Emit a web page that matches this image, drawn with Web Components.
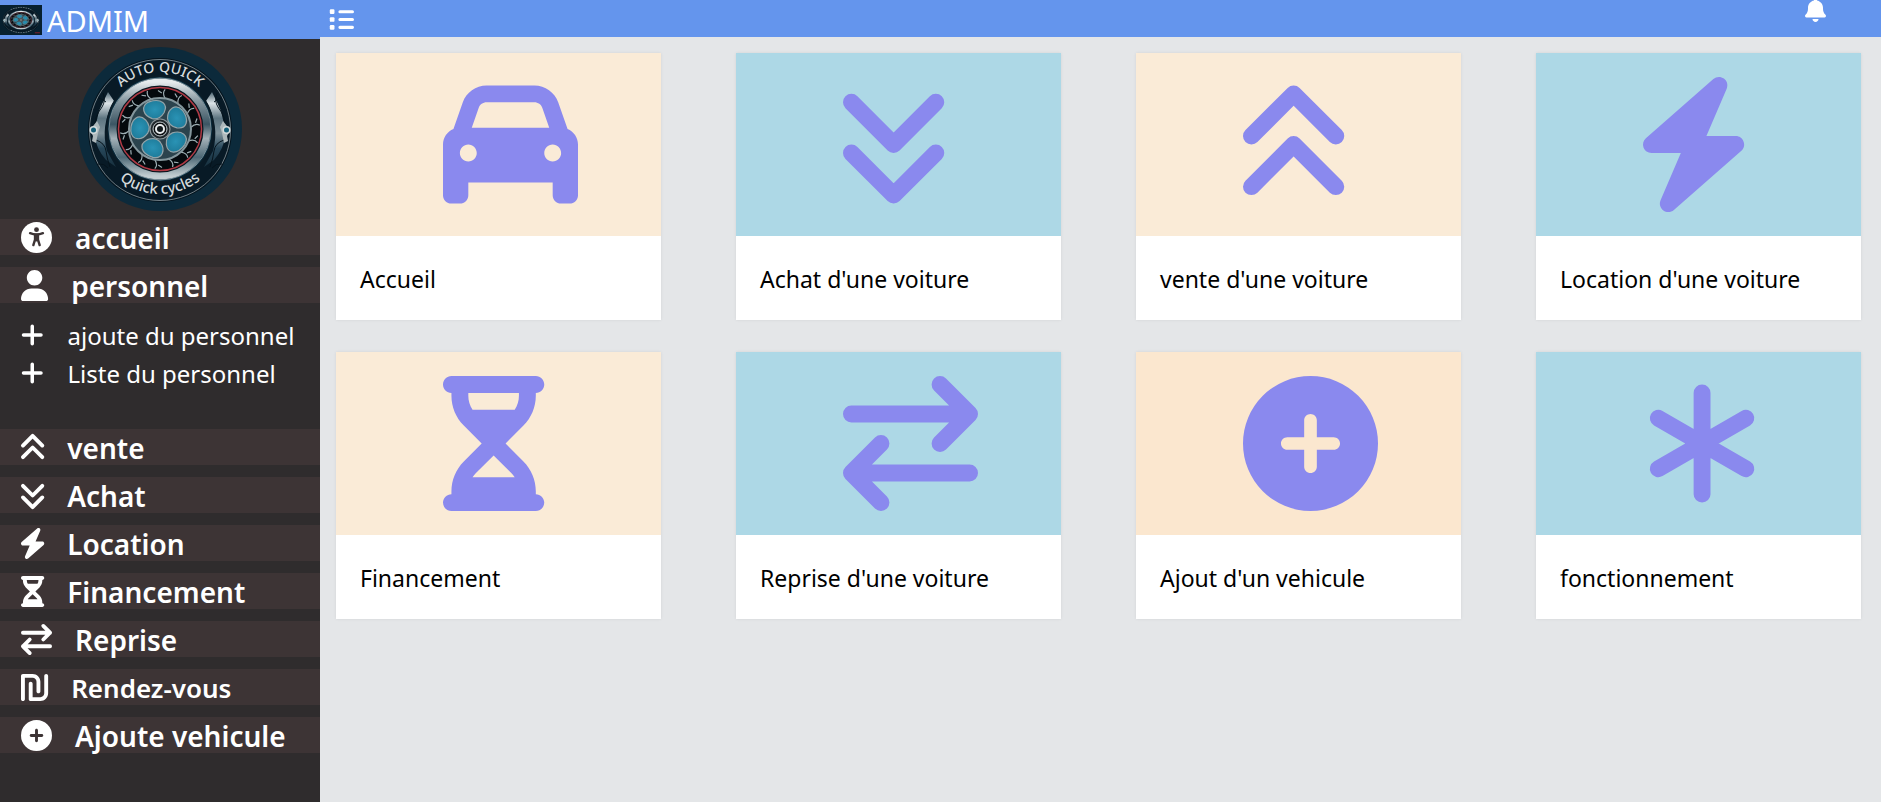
<!DOCTYPE html>
<html lang="fr">
<head>
<meta charset="utf-8">
<title>ADMIM</title>
<style>
  html, body { margin: 0; height: 100%; }
  body { font-family: "Noto Sans", "Open Sans", sans-serif; color: #000; background: #fff; }
</style>
</head>
<body>
<admin-app>
  <side-bar slot="side">
    <nav-item icon="access" href="#accueil">accueil</nav-item>
    <nav-item icon="user" href="#personnel">personnel</nav-item>
    <nav-group>
      <nav-item sub icon="plus" href="#ajout-personnel">ajoute du personnel</nav-item>
      <nav-item sub icon="plus" href="#liste-personnel">Liste du personnel</nav-item>
    </nav-group>
    <nav-item icon="up" href="#vente">vente</nav-item>
    <nav-item icon="down" href="#achat">Achat</nav-item>
    <nav-item icon="bolt" href="#location">Location</nav-item>
    <nav-item icon="hourglass" href="#financement">Financement</nav-item>
    <nav-item icon="swap" href="#reprise">Reprise</nav-item>
    <nav-item small icon="shekel" href="#rendez-vous">Rendez-vous</nav-item>
    <nav-item icon="circleplus" href="#ajout-vehicule">Ajoute vehicule</nav-item>
  </side-bar>
  <top-bar slot="main"></top-bar>
  <card-grid slot="main">
    <tile-card icon="car" href="#accueil">Accueil</tile-card>
    <tile-card tone="blue" icon="down" href="#achat">Achat d'une voiture</tile-card>
    <tile-card icon="up" href="#vente">vente d'une voiture</tile-card>
    <tile-card tone="blue" icon="bolt" href="#location">Location d'une voiture</tile-card>
    <tile-card icon="hourglass" href="#financement">Financement</tile-card>
    <tile-card tone="blue" icon="swap" href="#reprise">Reprise d'une voiture</tile-card>
    <tile-card tone="peach" icon="circleplus" href="#ajout-vehicule">Ajout d'un vehicule</tile-card>
    <tile-card tone="blue" icon="asterisk" href="#fonctionnement">fonctionnement</tile-card>
  </card-grid>
</admin-app>

<script>
const stroke = (d, w = 64) =>
  `<path d="${d}" fill="none" stroke="currentColor" stroke-width="${w}" stroke-linecap="round" stroke-linejoin="round"/>`;
const fill = d => `<path d="${d}" fill="currentColor" fill-rule="evenodd"/>`;

/* name: [view box width on a 512 high grid, markup] */
const ICONS = {
  car: [512, fill("M39.6 196.8L74.8 96.3C88.3 57.8 124.6 32 165.4 32H346.6C387.4 32 423.7 57.8 437.2 96.3L472.4 196.8C495.6 206.4 512 229.3 512 256V448C512 465.7 497.7 480 480 480H448C430.3 480 416 465.7 416 448V400H96V448C96 465.7 81.7 480 64 480H32C14.3 480 0 465.7 0 448V256C0 229.3 16.4 206.4 39.6 196.8zM109.1 192H402.9L376.8 117.4C372.3 104.6 360.2 96 346.6 96H165.4C151.8 96 139.7 104.6 135.2 117.4L109.1 192zM96 256C78.3 256 64 270.3 64 288C64 305.7 78.3 320 96 320C113.7 320 128 305.7 128 288C128 270.3 113.7 256 96 256zM416 320C433.7 320 448 305.7 448 288C448 270.3 433.7 256 416 256C398.3 256 384 270.3 384 288C384 305.7 398.3 320 416 320z")],
  down: [384, stroke("M32 96L192 256L352 96M32 288L192 448L352 288")],
  up: [384, stroke("M32 224L192 64L352 224M32 416L192 256L352 416")],
  bolt: [384, fill("M240.5 224H352C365.3 224 377.3 232.3 381.1 244.7C386.6 257.2 383.1 271.3 373.1 280.1L117.1 504.1C105.8 513.9 89.3 514.7 77.2 505.9C65.1 497.1 60.7 481.1 66.6 467.4L143.5 288H32C18.7 288 6.7 279.7 2 267.3C-2.6 254.8 .9 240.7 10.9 231.9L266.9 7.9C278.2 -1.9 294.7 -2.7 306.8 6.1C318.9 14.9 323.3 30.9 317.4 44.6L240.5 224z")],
  hourglass: [384, fill("M352 0C369.7 0 384 14.3 384 32C384 49.7 369.7 64 352 64V75C352 117.4 335.1 158.1 305.1 188.1L237.3 256L305.1 323.9C335.1 353.9 352 394.6 352 437V448C369.7 448 384 462.3 384 480C384 497.7 369.7 512 352 512H32C14.3 512 0 497.7 0 480C0 462.3 14.3 448 32 448V437C32 394.6 48.9 353.9 78.9 323.9L146.7 256L78.9 188.1C48.9 158.1 32 117.4 32 75V64C14.3 64 0 49.7 0 32C0 14.3 14.3 0 32 0H352zM112 128H272C282.4 112.4 288 94 288 75V64H96V75C96 94 101.6 112.4 112 128zM112 384H272C268.5 378.7 264.5 373.7 259.9 369.1L192 301.3L124.1 369.1C119.5 373.7 115.5 378.7 112 384z")],
  swap: [512, stroke("M32 144H480M368 32L480 144L368 256M480 368H32M144 256L32 368L144 480")],
  circleplus: [512, fill("M256 512A256 256 0 1 0 256 0A256 256 0 1 0 256 512zM232 344V280H168C154.7 280 144 269.3 144 256S154.7 232 168 232H232V168C232 154.7 242.7 144 256 144S280 154.7 280 168V232H344C357.3 232 368 242.7 368 256S357.3 280 344 280H280V344C280 357.3 269.3 368 256 368S232 357.3 232 344z")],
  asterisk: [448, stroke("M224 64V448M58 160L390 352M390 160L58 352")],
  plus: [448, stroke("M64 256H384M224 96V416")],
  user: [448, fill("M224 256C294.7 256 352 198.7 352 128S294.7 0 224 0S96 57.3 96 128S153.3 256 224 256zM274.7 304H173.3C77.6 304 0 381.6 0 477.3C0 496.4 15.5 512 34.7 512H413.4C432.5 512 448 496.5 448 477.3C448 381.6 370.4 304 274.7 304z")],
  shekel: [448, fill("M32 32C14.3 32 0 46.3 0 64V448C0 465.7 14.3 480 32 480S64 465.7 64 448V96H192C227.3 96 256 124.7 256 160V320C256 337.7 270.3 352 288 352S320 337.7 320 320V160C320 89.3 262.7 32 192 32H32zM320 480C390.7 480 448 422.7 448 352V64C448 46.3 433.7 32 416 32S384 46.3 384 64V352C384 387.3 355.3 416 320 416H192V192C192 174.3 177.7 160 160 160S128 174.3 128 192V448C128 465.7 142.3 480 160 480H320z")],
  access: [512, `<circle cx="256" cy="256" r="256" fill="currentColor"/>
    <g fill="none" stroke="var(--cut, #3d3435)" stroke-linecap="round" stroke-linejoin="round">
      <circle cx="256" cy="126" r="40" fill="var(--cut, #3d3435)" stroke="none"/>
      <path d="M150 184Q256 226 362 184" stroke-width="40"/>
      <path d="M232 212V290L204 382M280 212V290L308 382" stroke-width="40"/>
      <path d="M256 216V296" stroke-width="56"/>
    </g>`],
  list: [512, stroke("M224 96H480M224 256H480M224 416H480") +
    `<g fill="currentColor"><rect x="16" y="48" width="96" height="96" rx="24"/><rect x="16" y="208" width="96" height="96" rx="24"/><rect x="16" y="368" width="96" height="96" rx="24"/></g>`],
  bell: [448, fill("M256 32V51.2C329 66 384 130.6 384 208V226.8C384 273.9 401.3 319.2 432.5 354.4L439.9 362.7C448.3 372.2 450.4 385.6 445.2 397.1C440 408.6 428.6 416 416 416H32C19.4 416 8 408.6 2.8 397.1C-2.4 385.6 -.3 372.2 8.1 362.7L15.5 354.4C46.7 319.2 64 273.9 64 226.8V208C64 130.6 118.1 66 192 51.2V32C192 14.3 206.3 0 224 0S256 14.3 256 32zM224 512C207 512 190.7 505.3 178.7 493.3S160 464.1 160 448H288C288 464.1 281.3 481.3 269.3 493.3S241 512 224 512z")]
};

class BaseElement extends HTMLElement {
  render(html) {
    if (!this.shadowRoot) this.attachShadow({ mode: "open" }).innerHTML = html;
  }
}

/* Glyph whose height is --size; its width follows from the view box */
class UiIcon extends BaseElement {
  connectedCallback() {
    const [w, body] = ICONS[this.getAttribute("name")];
    this.render(`<style>
      :host { display: block; flex: none; line-height: 0; }
      svg { height: var(--size, 31px); display: block; overflow: visible; }
    </style><svg viewBox="0 0 ${w} 512" aria-hidden="true">${body}</svg>`);
  }
}

/* Wheel emblem; "thumb" gives the stretched strip version without lettering */
class WheelLogo extends BaseElement {
  connectedCallback() {
    const thumb = this.hasAttribute("thumb");
    const around = (n, fn) => Array.from({ length: n }, (_, i) => fn(i * 360 / n)).join("");
    const fins = around(14, a => `<path transform="rotate(${a + 6})" d="M1 -40Q-2 -36 2 -31M-2 -36L-6 -38" />`);
    const holes = around(5, a => `<path transform="rotate(${a - 14})" d="M-5 -12C-13 -17 -14 -27 -4 -29C9 -30 14 -22 8 -15C4 -11 -1 -10 -5 -12z"/>`);
    const side = flip => `<g transform="scale(${flip} 1)">
      <path d="M-52 -37L-46 -28Q-60 -4 -53 22L-44 38L-54 31Q-64 20 -66 4L-61 -18Q-57 -27 -52 -37z" fill="url(#steel)"/>
      <path d="M-57 -36Q-54 -28 -58 -22Q-66 -12 -65 0M-64 11Q-55 14 -54 22T-50 38M-62 -31Q-57 -30 -54 -27M-62 35Q-56 34 -52 39" fill="none" stroke="#05131c" stroke-width="1"/>
      <path d="M-70 1L-63 -8L-60 -2L-62 4L-64 14L-68 12L-67 7z" fill="#aeb9bc"/>
      <circle cx="-66.500" cy="1" r="4" fill="#d3dadb"/><circle cx="-66.500" cy="1" r="2.500" fill="#145f78"/></g>`;
    this.render(`<style>
      :host { display: block; flex: none; }
      svg { display: block; width: 100%; height: 100%; }
      text { font: 500 14px "Noto Sans", sans-serif; fill: #d5dbdd; }
      .low { font-size: 15px; }
    </style>
    <svg viewBox="-82 -82 164 164" ${thumb ? 'preserveAspectRatio="none" aria-hidden="true"' : 'role="img" aria-label="Auto Quick"'}>
      <defs>
        <linearGradient id="steel" x1="0" y1="0" x2="0" y2="1">
          <stop offset="0" stop-color="#4e6673"/><stop offset=".15" stop-color="#dde4e7"/><stop offset=".35" stop-color="#5d7480"/><stop offset=".55" stop-color="#7f929b"/><stop offset=".75" stop-color="#27475a"/><stop offset="1" stop-color="#17303e"/>
        </linearGradient>
        <linearGradient id="ring" x1="0" y1="0" x2="0" y2="1">
          <stop offset="0" stop-color="#e6ecee"/><stop offset=".2" stop-color="#8798a1"/><stop offset=".45" stop-color="#3b5563"/><stop offset=".6" stop-color="#a3b1b8"/><stop offset=".8" stop-color="#4e6976"/><stop offset="1" stop-color="#c3ced2"/>
        </linearGradient>
        <radialGradient id="teal"><stop offset="0" stop-color="#2a93b5"/><stop offset="1" stop-color="#1f7d9c"/></radialGradient>
        <path id="top" d="M-57 0A57 57 0 0 1 57 0"/>
        <path id="bottom" d="M-65 0A65 65 0 0 0 65 0"/>
      </defs>
      ${thumb ? '<rect x="-82" y="-82" width="164" height="164" fill="#07202f"/>' : '<circle r="82" fill="#0c2a3b"/>'}
      <circle cy="1" r="72" fill="#04131d"/>
      <circle cy="1" r="70.500" fill="#081a26" stroke="#8b999f" stroke-width=".8"/>
      ${side(1)}${side(-1)}
      <circle r="53" fill="#0b2f42" stroke="#0a1c27" stroke-width="2"/>
      <circle r="47" fill="#07151e" stroke="url(#ring)" stroke-width="7"/>
      <circle r="51" fill="none" stroke="#8d9ea6" stroke-width=".8"/>
      <circle r="41.500" fill="#04090d" stroke="#b03a45" stroke-width="1.500"/>
      <g fill="none" stroke="#9daeb3" stroke-width="1.200">${fins}</g>
      <circle r="31" fill="#2b434d" stroke="#84969c" stroke-width="2"/>
      <g fill="url(#teal)" stroke="#93a4a9" stroke-width="1.200">${holes}</g>
      <circle r="10" fill="#20282c" stroke="#8b9599" stroke-width="1.200"/>
      <circle r="7" fill="#0b0f11" stroke="#c5cdd0" stroke-width="1"/>
      <circle r="4" fill="#11181b" stroke="#e8eced" stroke-width="2"/>
      ${thumb ? '<path d="M-40 -57Q0 -80 40 -57M-40 57Q0 80 40 57" fill="none" stroke="#6f838b" stroke-width="4" stroke-dasharray="6 4"/><path d="M54 70H74" stroke="#8e1f2c" stroke-width="5"/>' : `
      <text text-anchor="middle"><textPath href="#top" startOffset="50%">AUTO QUICK</textPath></text>
      <text class="low" text-anchor="middle"><textPath href="#bottom" startOffset="50%">Quick cycles</textPath></text>`}
    </svg>`);
  }
}

class NavItem extends BaseElement {
  connectedCallback() {
    this.render(`<style>
      :host { display: block; --size: 31px; }
      a { display: flex; align-items: center; gap: 23px; box-sizing: border-box; height: 36px; padding-left: 21px;
          background: #3d3435; color: #fff; text-decoration: none; font-size: 28px; line-height: 36px; font-weight: 600; white-space: nowrap; }
      span { padding-top: 2px; }
      :host([small]) a { font-size: 26px; }
      :host([sub]) { --size: 28px; }
      :host([sub]) a { height: 38px; padding-left: 20px; background: none; font-size: 24px; font-weight: 400; }
    </style>
    <a href="${this.getAttribute("href")}"><ui-icon name="${this.getAttribute("icon")}"></ui-icon><span><slot></slot></span></a>`);
  }
}

class NavGroup extends BaseElement {
  connectedCallback() {
    this.render(`<style>:host { display: block; padding: 1px 0 25px; }</style><slot></slot>`);
  }
}

class SideBar extends BaseElement {
  connectedCallback() {
    this.render(`<style>
      :host { display: block; height: 100%; background: #2f2c2d; }
      header { display: flex; align-items: center; gap: 5px; height: 39px; background: #6495ed; color: #fff; font-size: 29px; line-height: 36px; }
      header span { padding-top: 2px; }
      header wheel-logo { width: 42px; height: 30px; }
      .emblem { width: 164px; height: 164px; margin: 8px auto; }
      nav { display: flex; flex-direction: column; gap: 12px; }
    </style>
    <header><wheel-logo thumb></wheel-logo><span>ADMIM</span></header>
    <wheel-logo class="emblem"></wheel-logo>
    <nav><slot></slot></nav>`);
  }
}

class TopBar extends BaseElement {
  connectedCallback() {
    this.render(`<style>
      :host { display: flex; justify-content: space-between; box-sizing: border-box; height: 37px; padding: 0 55px 0 9px; background: #6495ed; color: #fff; }
      button { display: flex; align-items: center; border: 0; padding: 0; background: none; color: inherit; }
      .menu { height: 38px; --size: 25px; }
      .bell { height: 20px; --size: 24px; }
    </style>
    <button class="menu" aria-label="Menu"><ui-icon name="list"></ui-icon></button>
    <button class="bell" aria-label="Notifications"><ui-icon name="bell"></ui-icon></button>`);
  }
}

class CardGrid extends BaseElement {
  connectedCallback() {
    this.render(`<style>
      :host { display: grid; grid-template-columns: repeat(4, 325px); justify-content: space-between; row-gap: 32px; padding: 16px 20px 32px 16px; }
      @media (max-width: 1700px) { :host { grid-template-columns: repeat(auto-fill, 325px); column-gap: 24px; justify-content: start; } }
    </style><slot></slot>`);
  }
}

class TileCard extends BaseElement {
  connectedCallback() {
    this.render(`<style>
      :host { display: block; --tone: #faebd7; --size: 135px; }
      :host([tone="blue"]) { --tone: #add8e6; }
      :host([tone="peach"]) { --tone: #fbe7cf; }
      a { display: block; background: #fff; color: #000; text-decoration: none; box-shadow: 0 0 3px rgba(0, 0, 0, .08); }
      .art { padding: 24px 0 24px 107px; background: var(--tone); color: #8a89ee; }
      .label { display: block; padding: 25px 24px 23px; font-size: 23px; line-height: 36px; }
    </style>
    <a href="${this.getAttribute("href")}"><div class="art"><ui-icon name="${this.getAttribute("icon")}"></ui-icon></div><span class="label"><slot></slot></span></a>`);
  }
}

class AdminApp extends BaseElement {
  connectedCallback() {
    this.render(`<style>
      :host { display: grid; grid-template-columns: 320px 1fr; min-height: 100%; }
      main { background: #e4e6e8; border-right: 1px solid #fff; }
    </style>
    <aside><slot name="side"></slot></aside><main><slot name="main"></slot></main>`);
  }
}

customElements.define("ui-icon", UiIcon);
customElements.define("wheel-logo", WheelLogo);
customElements.define("nav-item", NavItem);
customElements.define("nav-group", NavGroup);
customElements.define("side-bar", SideBar);
customElements.define("top-bar", TopBar);
customElements.define("card-grid", CardGrid);
customElements.define("tile-card", TileCard);
customElements.define("admin-app", AdminApp);
</script>
</body>
</html>
